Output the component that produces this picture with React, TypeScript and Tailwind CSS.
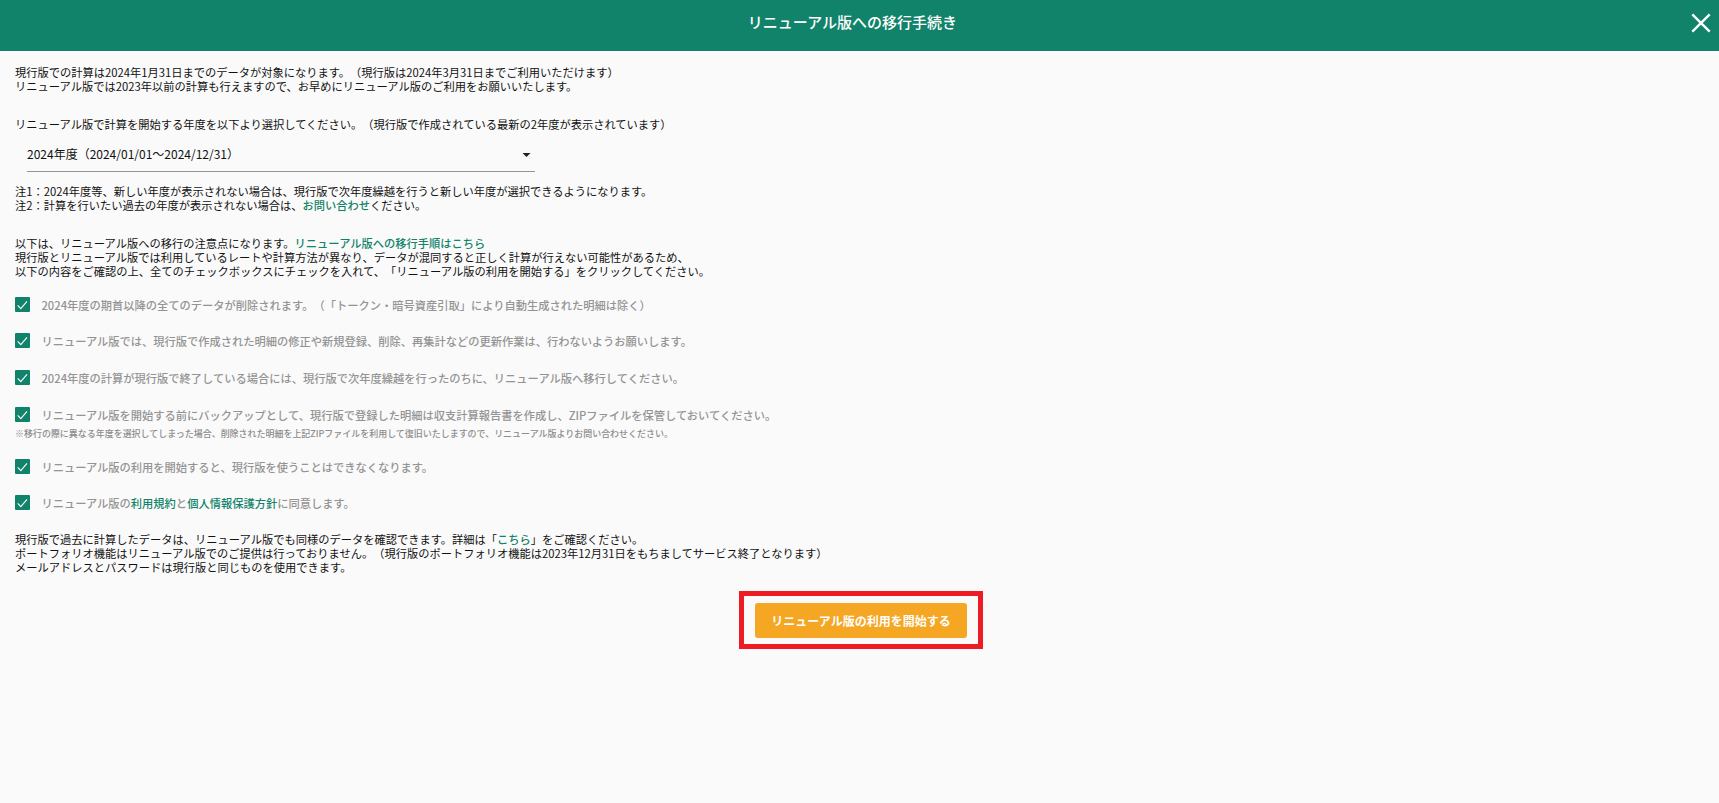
import React from 'react';

const Link = ({ children }: { children: React.ReactNode }) => (
  <a href="#" className="text-[#11836a] font-medium">{children}</a>
);

const CheckRow = ({ children, className }: { children: React.ReactNode; className: string }) => (
  <div className={`flex h-[15px] items-center ${className}`}>
    <span className="flex h-[15px] w-[15px] shrink-0 items-center justify-center rounded-[1px] bg-[#11836a]">
      <svg width="15" height="15" viewBox="0 0 15 15" fill="none" stroke="#fff" strokeWidth="1.1">
        <path d="M2.7 8.3 L5.8 11.6 L12 4.3" />
      </svg>
    </span>
    <span className="ml-[11.4px] text-[#949494] font-medium">{children}</span>
  </div>
);

const App = () => {
  return (
    <div className="min-h-[803px] bg-[#fafafa] font-['Noto_Sans_CJK_JP',sans-serif] text-[11.25px] leading-[14px] font-normal text-[#111] whitespace-nowrap [text-spacing-trim:space-all]">
      <header className="grid h-[51px] grid-cols-[1fr_auto_1fr] bg-[#11836a] text-white">
        <h1 className="col-start-2 pt-[11px] pr-[14px] text-[15px] leading-[22px] font-medium">リニューアル版への移行手続き</h1>
        <button className="mt-[13px] mr-[8px] h-5 w-5 justify-self-end">
          <svg width="20" height="20" viewBox="0 0 20 20" fill="none" stroke="#fff" strokeWidth="2.4">
            <path d="M1.3 1.3 L18.7 18.7 M18.7 1.3 L1.3 18.7" />
          </svg>
        </button>
      </header>
      <main className="px-[15px] pt-[14px]">
        <p>現行版での計算は2024年1月31日までのデータが対象になります。（現行版は2024年3月31日までご利用いただけます）</p>
        <p>リニューアル版では2023年以前の計算も行えますので、お早めにリニューアル版のご利用をお願いいたします。</p>
        <p className="mt-[24px]">リニューアル版で計算を開始する年度を以下より選択してください。（現行版で作成されている最新の2年度が表示されています）</p>
        <div className="mt-[11px] ml-[12px] flex h-[30px] w-[508px] items-start justify-between border-b border-[#949494] pt-[4px] pr-[4.5px] text-[12px] leading-[16px]">
          <span>2024年度（2024/01/01～2024/12/31）</span>
          <svg className="mt-[7px]" width="9" height="4" viewBox="0 0 9 4" fill="#212121">
            <path d="M0.5 0 H8.5 L4.5 4 Z" />
          </svg>
        </div>
        <p className="mt-[12px]">注1：2024年度等、新しい年度が表示されない場合は、現行版で次年度繰越を行うと新しい年度が選択できるようになります。</p>
        <p>注2：計算を行いたい過去の年度が表示されない場合は、<Link>お問い合わせ</Link>ください。</p>
        <p className="mt-[24px]">以下は、リニューアル版への移行の注意点になります。<Link>リニューアル版への移行手順はこちら</Link></p>
        <p>現行版とリニューアル版では利用しているレートや計算方法が異なり、データが混同すると正しく計算が行えない可能性があるため、</p>
        <p>以下の内容をご確認の上、全てのチェックボックスにチェックを入れて、「リニューアル版の利用を開始する」をクリックしてください。</p>
        <CheckRow className="mt-[19px]">2024年度の期首以降の全てのデータが削除されます。（「トークン・暗号資産引取」により自動生成された明細は除く）</CheckRow>
        <CheckRow className="mt-[21px]">リニューアル版では、現行版で作成された明細の修正や新規登録、削除、再集計などの更新作業は、行わないようお願いします。</CheckRow>
        <CheckRow className="mt-[22px]">2024年度の計算が現行版で終了している場合には、現行版で次年度繰越を行ったのちに、リニューアル版へ移行してください。</CheckRow>
        <CheckRow className="mt-[22px]">リニューアル版を開始する前にバックアップとして、現行版で登録した明細は収支計算報告書を作成し、ZIPファイルを保管しておいてください。</CheckRow>
        <p className="mt-[5px] text-[8.98px] font-medium text-[#8c8c8c]">※移行の際に異なる年度を選択してしまった場合、削除された明細を上記ZIPファイルを利用して復旧いたしますので、リニューアル版よりお問い合わせください。</p>
        <CheckRow className="mt-[18px]">リニューアル版の利用を開始すると、現行版を使うことはできなくなります。</CheckRow>
        <CheckRow className="mt-[21px]">リニューアル版の<Link>利用規約</Link>と<Link>個人情報保護方針</Link>に同意します。</CheckRow>
        <p className="mt-[22px]">現行版で過去に計算したデータは、リニューアル版でも同様のデータを確認できます。詳細は「<Link>こちら</Link>」をご確認ください。</p>
        <p>ポートフォリオ機能はリニューアル版でのご提供は行っておりません。（現行版のポートフォリオ機能は2023年12月31日をもちましてサービス終了となります）</p>
        <p>メールアドレスとパスワードは現行版と同じものを使用できます。</p>
        <div className="mt-[17px] ml-[724px] flex h-[58px] w-[244px] items-start border-[5px] border-[#ed1c24] pt-[7px] pl-[11px]">
          <button className="h-[35px] w-[212px] rounded-[3px] bg-[#f5a623] pt-[1px] text-[12px] font-bold text-white">リニューアル版の利用を開始する</button>
        </div>
      </main>
    </div>
  );
};

export default App;
